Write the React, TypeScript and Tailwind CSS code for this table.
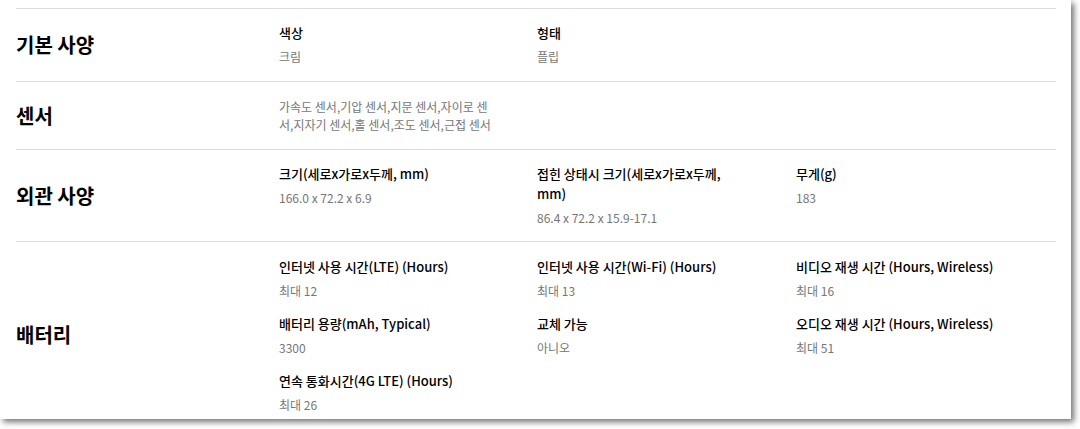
import React from "react";

type Item = { label?: string; value: string; w?: string };
type Row = { title: string; items: Item[]; pad: string };

const rows: Row[] = [
  {
    title: "기본 사양",
    pad: "pt-[14px] pb-[15px]",
    items: [
      { label: "색상", value: "크림" },
      { label: "형태", value: "플립" },
    ],
  },
  {
    title: "센서",
    pad: "pt-[16px] pb-[15px]",
    items: [
      {
        w: "w-[216px]",
        value:
          "가속도 센서,기압 센서,지문 센서,자이로 센서,지자기 센서,홀 센서,조도 센서,근접 센서",
      },
    ],
  },
  {
    title: "외관 사양",
    pad: "pt-[14px] pb-[14px]",
    items: [
      { label: "크기(세로x가로x두께, mm)", value: "166.0 x 72.2 x 6.9" },
      { label: "접힌 상태시 크기(세로x가로x두께, mm)", value: "86.4 x 72.2 x 15.9-17.1" },
      { label: "무게(g)", value: "183" },
    ],
  },
  {
    title: "배터리",
    pad: "pt-[15px] pb-[14px]",
    items: [
      { label: "인터넷 사용 시간(LTE) (Hours)", value: "최대 12" },
      { label: "인터넷 사용 시간(Wi-Fi) (Hours)", value: "최대 13" },
      { label: "비디오 재생 시간 (Hours, Wireless)", value: "최대 16" },
      { label: "배터리 용량(mAh, Typical)", value: "3300" },
      { label: "교체 가능", value: "아니오" },
      { label: "오디오 재생 시간 (Hours, Wireless)", value: "최대 51" },
      { label: "연속 통화시간(4G LTE) (Hours)", value: "최대 26" },
    ],
  },
];

export default function App() {
  return (
    <div
      className="w-[1080px] h-[429px] bg-white"
      style={{ fontFamily: '"Noto Sans CJK KR", "Noto Sans", sans-serif' }}
    >
      <div className="w-[1071px] h-[419px] bg-white overflow-hidden shadow-[3px_3px_6px_rgba(0,0,0,0.55)] pt-[8px] px-[16px]">
        <div className="w-[1040px]">
          {rows.map((row) => (
            <div key={row.title} className="flex border-t border-[#dddddd]">
              <div className="w-[263px] shrink-0 flex items-center text-[20px] leading-[28px] font-bold text-black">
                {row.title}
              </div>
              <div className={"grid grid-cols-[258px_259px_260px] gap-y-[14px] " + row.pad}>
                {row.items.map((it, i) => (
                  <div key={i} className={it.w ?? "w-[206px]"}>
                    {it.label && (
                      <div className="text-[13px] leading-[20px] font-medium text-black">
                        {it.label}
                      </div>
                    )}
                    <div
                      className={
                        it.label
                          ? "mt-[5px] text-[12px] leading-[18px] text-[#767676]"
                          : "text-[12px] leading-[18px] text-[#767676]"
                      }
                    >
                      {it.value}
                    </div>
                  </div>
                ))}
              </div>
            </div>
          ))}
        </div>
      </div>
    </div>
  );
}
